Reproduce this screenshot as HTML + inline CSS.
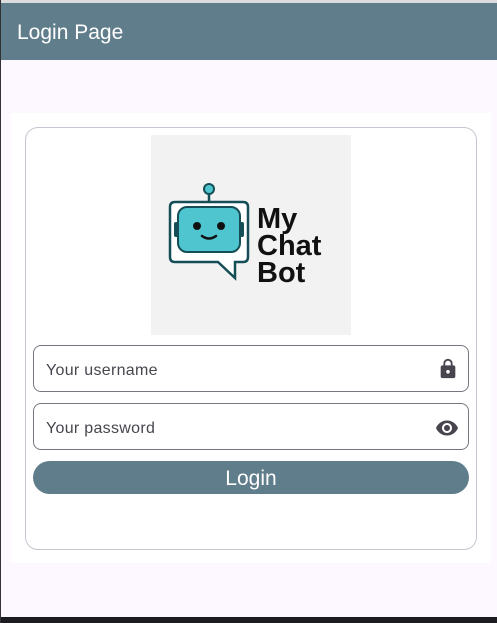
<!DOCTYPE html>
<html><head><style>
*{margin:0;padding:0;box-sizing:border-box}
html,body{width:497px;height:623px;overflow:hidden;background:#fdf7ff;font-family:"Liberation Sans",Roboto,sans-serif;position:relative}
.top{position:absolute;left:0;top:0;width:497px;height:3px;background:#dcdcdc}
.lft{position:absolute;left:0;top:0;width:1px;height:623px;background:#333}
.bar{position:absolute;left:1px;top:3px;right:0;height:57px;background:#607d8b;color:#fff;font-size:21px;padding:18px 0 0 16px}
.white{position:absolute;left:11px;top:113px;width:480px;height:450px;background:#fff}
.card{position:absolute;left:25px;top:127px;width:452px;height:423px;border:1px solid #cac4d0;border-radius:13px}
.logo{position:absolute;left:151px;top:135px;width:200px;height:200px;background:#f2f2f2}
.field{position:absolute;left:33px;width:436px;height:47px;border:1px solid #79747e;border-radius:8px;font-size:16px;color:#49454f;padding:16px 0 0 12px;letter-spacing:.3px}
.field svg{position:absolute;right:9px;top:12px}
.btn{position:absolute;left:33px;top:461px;width:436px;height:33px;border-radius:17px;background:#607d8b;color:#fff;font-size:21px;text-align:center;line-height:35px}
.bot{position:absolute;left:0;top:617px;width:497px;height:6px;background:#1c1b1f}
</style></head><body>
<div class="top"></div>
<div class="bar">Login Page</div>
<div class="white"></div>
<div class="card"></div>
<div class="logo">
<svg width="200" height="200" viewBox="0 0 200 200">
<circle cx="58" cy="54" r="5" fill="#4fc5cf" stroke="#164e57" stroke-width="2"/>
<line x1="58" y1="59" x2="58" y2="67" stroke="#164e57" stroke-width="2.5"/>
<path d="M24 67 H92 Q97 67 97 72 V122 Q97 127 92 127 H84 V143 L67 127 H24 Q19 127 19 122 V72 Q19 67 24 67 Z" fill="#fff" stroke="#164e57" stroke-width="2.5"/>
<rect x="27" y="72" width="62" height="45" rx="9" fill="#4fc5cf" stroke="#164e57" stroke-width="2"/>
<rect x="23" y="87" width="5" height="15" rx="2" fill="#164e57"/>
<rect x="88" y="87" width="5" height="15" rx="2" fill="#164e57"/>
<circle cx="46" cy="91" r="4" fill="#111"/>
<circle cx="70" cy="91" r="4" fill="#111"/>
<path d="M51 101 Q58 106 65 101" fill="none" stroke="#111" stroke-width="2.5" stroke-linecap="round"/>
<text x="106" y="93" font-family="Liberation Sans,sans-serif" font-weight="bold" font-size="29" fill="#111">My</text>
<text x="106" y="120" font-family="Liberation Sans,sans-serif" font-weight="bold" font-size="29" fill="#111">Chat</text>
<text x="106" y="147" font-family="Liberation Sans,sans-serif" font-weight="bold" font-size="29" fill="#111">Bot</text>
</svg>
</div>
<div class="field" style="top:345px">Your username
<svg width="22" height="22" viewBox="0 0 24 24"><path fill="#49454f" d="M18 8h-1V6c0-2.76-2.24-5-5-5S7 3.24 7 6v2H6c-1.1 0-2 .9-2 2v10c0 1.1.9 2 2 2h12c1.1 0 2-.9 2-2V10c0-1.1-.9-2-2-2zm-6 9c-1.1 0-2-.9-2-2s.9-2 2-2 2 .9 2 2-.9 2-2 2zM9 8V6c0-1.66 1.34-3 3-3s3 1.34 3 3v2H9z"/></svg></div>
<div class="field" style="top:403px">Your password
<svg width="24" height="24" viewBox="0 0 24 24"><path fill="#49454f" d="M12 4.5C7 4.5 2.73 7.610 1 12c1.730 4.390 6 7.500 11 7.500s9.270-3.110 11-7.500c-1.730-4.390-6-7.500-11-7.500zM12 17c-2.760 0-5-2.240-5-5s2.240-5 5-5 5 2.240 5 5-2.240 5-5 5zm0-8c-1.660 0-3 1.340-3 3s1.340 3 3 3 3-1.340 3-3-1.340-3-3-3z"/></svg></div>
<div class="btn">Login</div>
<div class="bot"></div>
<div class="lft"></div>
</body></html>
